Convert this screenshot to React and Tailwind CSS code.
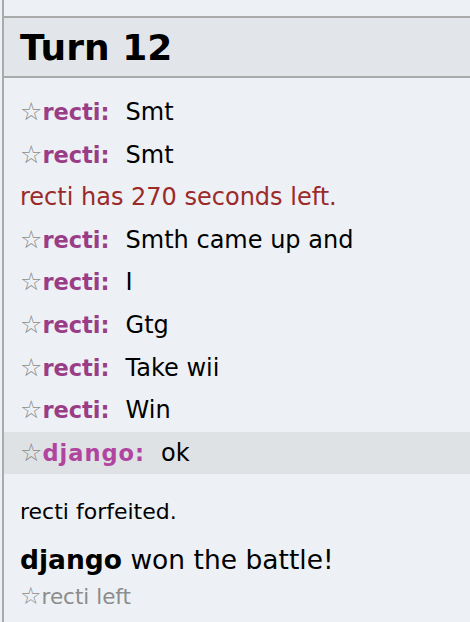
import React from "react";

const font = { fontFamily: '"DejaVu Sans", Verdana, sans-serif' };

function Row({ name, color, msg, hl, extra = "" }) {
  return (
    <div className={`flex items-baseline pl-[16px] py-[5px] leading-[32.6px] ${hl ? "bg-[#dfe2e5]" : ""}`}>
      <span className="text-[25px] text-[#8c8c8c]">☆</span>
      <span className={`text-[22.5px] font-bold ${color} ${extra}`}>{name}:</span>
      <span className="text-[24px] text-black ml-[16px]">{msg}</span>
    </div>
  );
}

export default function App() {
  const msgs = [
    { t: "row", name: "recti", msg: "Smt" },
    { t: "row", name: "recti", msg: "Smt" },
    { t: "err", msg: "recti has 270 seconds left." },
    { t: "row", name: "recti", msg: "Smth came up and" },
    { t: "row", name: "recti", msg: "I" },
    { t: "row", name: "recti", msg: "Gtg" },
    { t: "row", name: "recti", msg: "Take wii" },
    { t: "row", name: "recti", msg: "Win" },
  ];
  return (
    <div className="w-[470px] h-[622px] bg-[#edf1f5] overflow-hidden" style={font}>
      <div className="ml-[2px] h-full border-l-2 border-[#aaaaaa] pt-[16px]">
        <div className="h-[62px] border-y-2 border-[#aaaaaa] bg-[#e2e6ea] flex items-center pl-[16px]">
          <h2 className="text-[36px] font-bold text-black leading-none mt-[2px]">Turn 12</h2>
        </div>
        <div className="mt-[13px]">
          {msgs.map((m, i) =>
            m.t === "row" ? (
              <Row key={i} name={m.name} color="text-[#9a3d87]" msg={m.msg} />
            ) : (
              <div key={i} className="pl-[16px] py-[5px] leading-[32.6px] text-[24px] text-[#9b2a2a]">
                {m.msg}
              </div>
            )
          )}
          <Row name="django" color="text-[#b0449f]" extra="tracking-[1px]" msg="ok" hl />
        </div>
        <div className="pl-[16px] mt-[23px] text-[22px] leading-[30px] text-black">recti forfeited.</div>
        <div className="pl-[16px] mt-[16px] text-[26.5px] leading-[34px] text-black">
          <span className="font-bold">django</span> won the battle!
        </div>
        <div className="pl-[16px] mt-[5px] text-[21.5px] leading-[28px] text-[#8c8c8c]">
          <span className="text-[24px]">☆</span>recti left
        </div>
      </div>
    </div>
  );
}
